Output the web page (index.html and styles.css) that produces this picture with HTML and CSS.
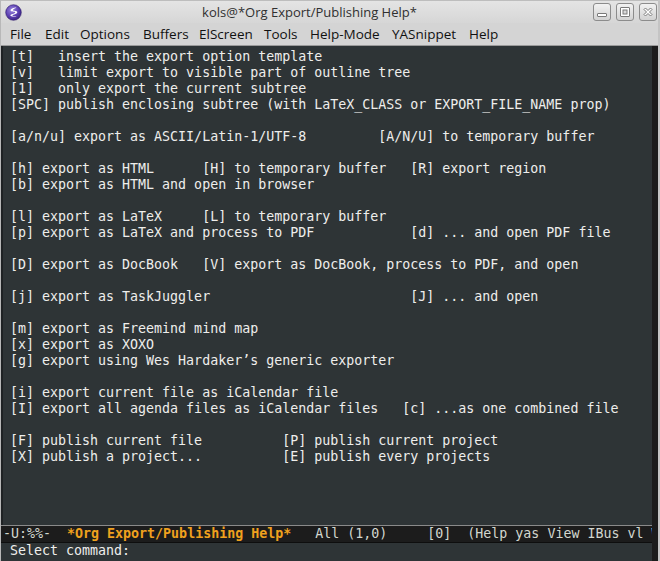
FILE: index.html
```html
<!DOCTYPE html>
<html>
<head>
<meta charset="utf-8">
<link rel="stylesheet" href="styles.css">
</head>
<body>
<div class="frame">
  <div class="titlebar">
    <svg class="app-icon" width="17" height="17" viewBox="0 0 17 17">
      <defs>
        <radialGradient id="ig" cx="40%" cy="35%" r="70%">
          <stop offset="0" stop-color="#9a86e0"/>
          <stop offset="0.6" stop-color="#5b3fb0"/>
          <stop offset="1" stop-color="#3a2380"/>
        </radialGradient>
      </defs>
      <circle cx="8.5" cy="8.5" r="7.8" fill="url(#ig)" stroke="#2d1a6a" stroke-width="0.6"/>
      <path d="M11.5 3.6 C8.5 3.8 5.2 5 5.6 6.6 C6 8 10.3 7.3 10.2 8.6 C10.1 9.9 5.2 10.2 5.4 11.6 C5.6 12.8 9 13 11.8 12.4 C9.6 12.2 7.4 12 7.5 11.4 C7.7 10.6 12.4 10.1 12.3 8.3 C12.2 6.6 8 7.2 7.9 6.3 C7.8 5.4 10 4.4 11.5 3.6 Z" fill="#fff"/>
    </svg>
    <div class="title">kols@*Org Export/Publishing Help*</div>
    <div class="wbuttons">
      <span class="wbtn">
        <svg width="16" height="16" viewBox="0 0 16 16"><rect x="3.5" y="9.5" width="9" height="3" rx="0.5" fill="#fff" stroke="#7a7a7a"/></svg>
      </span>
      <span class="wbtn">
        <svg width="16" height="16" viewBox="0 0 16 16"><rect x="3.5" y="3.5" width="9" height="9" rx="0.5" fill="#fff" stroke="#7a7a7a"/><rect x="6" y="6" width="4" height="4" fill="#d8d8d8" stroke="#7a7a7a"/></svg>
      </span>
      <span class="wbtn">
        <svg width="16" height="16" viewBox="0 0 16 16"><path d="M4 5.5 L5.5 4 L8 6.5 L10.5 4 L12 5.5 L9.5 8 L12 10.5 L10.5 12 L8 9.5 L5.5 12 L4 10.5 L6.5 8 Z" fill="#fff" stroke="#7a7a7a" stroke-linejoin="round"/></svg>
      </span>
    </div>
  </div>
  <div class="menubar">
    <span>File</span><span>Edit</span><span>Options</span><span>Buffers</span><span>ElScreen</span><span>Tools</span><span>Help-Mode</span><span>YASnippet</span><span>Help</span>
  </div>
  <div class="body-row">
    <div class="emacs">
      <div class="window">
<pre class="buffer">[t]   insert the export option template
[v]   limit export to visible part of outline tree
[1]   only export the current subtree
[SPC] publish enclosing subtree (with LaTeX_CLASS or EXPORT_FILE_NAME prop)

[a/n/u] export as ASCII/Latin-1/UTF-8         [A/N/U] to temporary buffer

[h] export as HTML      [H] to temporary buffer   [R] export region
[b] export as HTML and open in browser

[l] export as LaTeX     [L] to temporary buffer
[p] export as LaTeX and process to PDF            [d] ... and open PDF file

[D] export as DocBook   [V] export as DocBook, process to PDF, and open

[j] export as TaskJuggler                         [J] ... and open

[m] export as Freemind mind map
[x] export as XOXO
[g] export using Wes Hardaker’s generic exporter

[i] export current file as iCalendar file
[I] export all agenda files as iCalendar files   [c] ...as one combined file

[F] publish current file          [P] publish current project
[X] publish a project...          [E] publish every projects</pre>
        <div class="modeline">-U:%%-  <span class="bufname">*Org Export/Publishing Help*</span>   All (1,0)     [0]  (Help yas View IBus vl W</div>
      </div>
      <div class="minibuffer">Select command:</div>
    </div>
    <div class="scrollbar"></div>
  </div>
</div>
</body>
</html>
```

FILE: styles.css
```css
html, body {
  margin: 0;
  padding: 0;
}
body {
  width: 660px;
  height: 561px;
  overflow: hidden;
  background: #d4d4d4;
}
.frame {
  width: 660px;
  height: 561px;
  display: flex;
  flex-direction: column;
  box-sizing: border-box;
  border-left: 1px solid #b8b8b8;
  border-right: 2px solid #c4c4c4;
}
.titlebar {
  height: 23px;
  flex: none;
  display: flex;
  align-items: center;
  background: linear-gradient(#e4e4e4, #d6d6d6);
  border-top: 1px solid #bdbdbd;
  box-sizing: border-box;
}
.app-icon {
  margin-left: 4px;
  flex: none;
}
.title {
  flex: 1;
  text-align: center;
  font-family: "Open Sans", "Noto Sans", sans-serif;
  font-size: 13px;
  color: #303030;
  padding-left: 4px;
  padding-bottom: 1px;
}
.wbuttons {
  display: flex;
  gap: 5px;
  margin-right: 1px;
}
.wbtn {
  width: 16px;
  height: 16px;
  border: 1px solid #8c8c8c;
  border-radius: 3px;
  background: linear-gradient(#f2f2f2, #d2d2d2);
  display: flex;
}
.menubar {
  height: 22px;
  flex: none;
  display: grid;
  grid-template-columns: 35px 35px 63px 56px 65px 46px 82px 77px auto;
  align-items: center;
  padding-left: 9px;
  background: #d4d4d4;
  border-bottom: 1px solid #9a9a9a;
  font-family: "Open Sans", "Noto Sans", sans-serif;
  font-size: 13.5px;
  color: #111;
}
.body-row {
  flex: 1;
  display: flex;
  min-height: 0;
}
.emacs {
  flex: 1;
  display: flex;
  flex-direction: column;
  min-width: 0;
}
.window {
  flex: 1;
  display: flex;
  flex-direction: column;
  min-height: 0;
}
.buffer {
  flex: 1;
  margin: 0;
  padding: 3px 0 0 7px;
  background: #2e3436;
  border-left: 2px solid #1f2224;
  color: #eeeeec;
  font-family: "DejaVu Sans Mono", monospace;
  font-size: 13.3px;
  line-height: 16px;
  white-space: pre;
  overflow: hidden;
}
.modeline {
  height: 16px;
  flex: none;
  padding-left: 2px;
  background: #1c1c1c;
  border-top: 1px solid #8a8a8a;
  border-bottom: 1px solid #0e0e0e;
  color: #d3d7cf;
  font-family: "DejaVu Sans Mono", monospace;
  font-size: 13.3px;
  line-height: 16px;
  white-space: pre;
  overflow: hidden;
}
.bufname {
  color: #f0a11e;
  font-weight: bold;
}
.minibuffer {
  height: 18px;
  flex: none;
  padding-left: 9px;
  background: #2e3436;
  color: #eeeeec;
  font-family: "DejaVu Sans Mono", monospace;
  font-size: 13.3px;
  line-height: 16px;
  white-space: pre;
}
.scrollbar {
  width: 6px;
  flex: none;
  background: #1c1c1c;
}
```
